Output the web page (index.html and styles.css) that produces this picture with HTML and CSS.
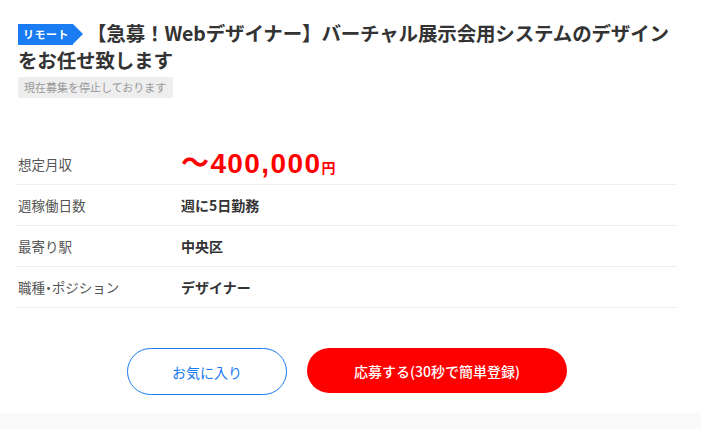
FILE: index.html
```html
<!DOCTYPE html>
<html lang="ja">
<head>
<meta charset="utf-8">
<link rel="stylesheet" href="styles.css">
</head>
<body>
<div class="page">
  <header class="head">
    <div class="title-line"><span class="badge">リモート</span><h1 class="title">【急募！Webデザイナー】バーチャル展示会用システムのデザインをお任せ致します</h1></div>
    <span class="status">現在募集を停止しております</span>
  </header>
  <dl class="info">
    <div class="row salary-row">
      <dt>想定月収</dt>
      <dd class="salary">〜400,000<span class="yen">円</span></dd>
    </div>
    <div class="row">
      <dt>週稼働日数</dt>
      <dd>週に5日勤務</dd>
    </div>
    <div class="row">
      <dt>最寄り駅</dt>
      <dd>中央区</dd>
    </div>
    <div class="row">
      <dt>職種<span class="dot">・</span>ポジション</dt>
      <dd>デザイナー</dd>
    </div>
  </dl>
  <div class="actions">
    <button class="btn fav">お気に入り</button>
    <button class="btn apply">応募する(30秒で簡単登録)</button>
  </div>
</div>
<div class="footer-bg"></div>
</body>
</html>
```

FILE: styles.css
```css
html, body {
  margin: 0;
  padding: 0;
  background: #fff;
  font-family: "Noto Sans CJK JP", "Noto Sans", sans-serif;
  color: #333;
}
.page {
  width: 661px;
  padding: 0 0 0 16px;
}
.head {
  padding: 19px 0 0 2px;
}
.title-line {
  width: 664px;
  font-size: 19.5px;
  line-height: 27px;
}
.title {
  display: inline;
  margin: 0;
  font-size: 19.5px;
  font-weight: 700;
  line-height: 27px;
  color: #333;
  letter-spacing: -0.15px;
}
.badge {
  display: inline-block;
  position: relative;
  vertical-align: 2px;
  background: #1a7cf2;
  color: #fff;
  font-size: 11px;
  font-weight: 700;
  line-height: 21px;
  height: 21px;
  padding: 0 4px 0 5px;
  margin-right: 14px;
  letter-spacing: 0.5px;
}
.badge::after {
  content: "";
  position: absolute;
  right: -10px;
  top: 0;
  border-left: 10px solid #1a7cf2;
  border-top: 10.5px solid transparent;
  border-bottom: 10.5px solid transparent;
}
.status {
  display: inline-block;
  margin-top: 4px;
  background: #eee;
  color: #999;
  font-size: 11px;
  line-height: 21px;
  padding: 0 7px 0 6px;
  border-radius: 2px;
}
.info {
  margin: 45px 0 0;
  padding: 0;
}
.row {
  display: flex;
  align-items: center;
  height: 40px;
  border-bottom: 1px solid #eee;
}
.salary-row {
  height: 41px;
}
.row dt {
  width: 163px;
  padding-left: 2px;
  font-size: 13.5px;
  color: #555;
}
.dot {
  font-feature-settings: "palt";
}
.row dd {
  margin: 0;
  font-size: 14px;
  font-weight: 700;
  color: #333;
}
.salary {
  color: #f00 !important;
  font-size: 28px !important;
  line-height: 1;
  letter-spacing: 1.4px;
  font-family: "Liberation Sans", "Noto Sans CJK JP", sans-serif;
}
.yen {
  font-size: 14px;
  letter-spacing: 0;
  font-family: "Noto Sans CJK JP", sans-serif;
}
.actions {
  display: flex;
  justify-content: center;
  gap: 20px;
  padding: 40px 0 0;
  margin-left: -16px;
  width: 694px;
}
.btn {
  font-family: "Noto Sans CJK JP", sans-serif;
  font-size: 14px;
  border-radius: 24px;
  cursor: pointer;
}
.fav {
  width: 160px;
  height: 47px;
  background: #fff;
  color: #1a7cf2;
  border: 1px solid #1a7cf2;
}
.apply {
  width: 260px;
  height: 45px;
  background: #f00;
  color: #fff;
  border: none;
  font-weight: 500;
}
.footer-bg {
  margin-top: 18px;
  height: 20px;
  background: #fafafa;
}
```
